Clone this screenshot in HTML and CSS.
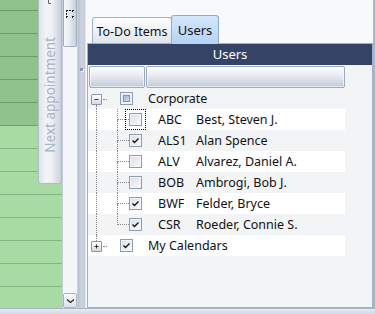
FILE: index.html
```html
<!DOCTYPE html>
<html>
<head>
<meta charset="utf-8">
<link rel="stylesheet" href="styles.css">
</head>
<body>
<div class="window">
  <div class="main">
    <div class="calendar">
      <div class="slot dark first"></div>
      <div class="slot dark"></div>
      <div class="slot dark"></div>
      <div class="slot dark"></div>
      <div class="slot dark"></div>
      <div class="slot dark"></div>
      <div class="slot"></div>
      <div class="slot"></div>
      <div class="slot"></div>
      <div class="slot"></div>
      <div class="slot"></div>
      <div class="slot"></div>
      <div class="slot"></div>
      <div class="slot"></div>
      <div class="next-appt">
        <svg class="pin" width="8" height="5" viewBox="0 0 8 5"><path d="M2.5 0 V3.5 H5" stroke="#5c6678" fill="none"/><path d="M5.5 0 V2" stroke="#ffffff" fill="none"/></svg>
        <span class="vtext">Next appointment</span>
      </div>
    </div>
    <div class="vscroll">
      <div class="thumb">
        <svg width="8" height="8" viewBox="0 0 8 8"><rect x="0" y="0" width="2" height="2" fill="#222"/><rect x="3" y="0" width="2" height="1" fill="#222"/><rect x="6" y="0" width="2" height="2" fill="#222"/><rect x="0" y="3" width="1" height="2" fill="#222"/><rect x="0" y="6" width="2" height="2" fill="#222"/><rect x="6" y="6" width="2" height="2" fill="#222"/><rect x="1" y="1" width="1" height="1" fill="#fff"/><rect x="7" y="1" width="1" height="1" fill="#fff"/><rect x="1" y="7" width="1" height="1" fill="#fff"/><rect x="7" y="7" width="1" height="1" fill="#fff"/></svg>
      </div>
      <div class="track"></div>
      <div class="down-btn">
        <svg width="9" height="6" viewBox="0 0 9 6"><path d="M1 1.5 L4.5 4.5 L8 1.5" stroke="#222" stroke-width="1.2" fill="none"/></svg>
      </div>
    </div>
    <div class="splitter"><span class="grip-dot"></span></div>
    <div class="panel">
      <div class="tabs">
        <div class="tab">To-Do Items</div>
        <div class="tab active">Users</div>
      </div>
      <div class="content">
        <div class="title">Users</div>
        <div class="col-heads">
          <div class="col c1"></div>
          <div class="col c2"></div>
        </div>
        <div class="tree">
          <div class="row">
            <div class="g1">
              <span class="sp-top"></span>
              <span class="exp-wrap"><svg class="exp" width="11" height="11" viewBox="0 0 11 11"><path d="M3 5.5 H8" stroke="#111" stroke-width="1"/></svg><span class="hdots"></span></span>
              <span class="ln"></span>
            </div>
            <span class="cb root-cb"><span class="ind"></span></span>
            <span class="root-label">Corporate</span>
          </div>
          <div class="row alt">
            <div class="g1"><span class="ln"></span></div>
            <div class="g2"><span class="tl"></span><span class="bl"></span></div>
            <span class="cb focus"></span>
            <span class="code">ABC</span><span class="name">Best, Steven J.</span>
          </div>
          <div class="row">
            <div class="g1"><span class="ln"></span></div>
            <div class="g2"><span class="tl"></span><span class="bl"></span></div>
            <span class="cb"><svg width="11" height="11" viewBox="0 0 11 11"><path d="M2.5 5.5 L4.5 7.5 L8.5 3.5" stroke="#111" stroke-width="1.3" fill="none"/></svg></span>
            <span class="code">ALS1</span><span class="name">Alan Spence</span>
          </div>
          <div class="row alt">
            <div class="g1"><span class="ln"></span></div>
            <div class="g2"><span class="tl"></span><span class="bl"></span></div>
            <span class="cb"></span>
            <span class="code">ALV</span><span class="name">Alvarez, Daniel A.</span>
          </div>
          <div class="row">
            <div class="g1"><span class="ln"></span></div>
            <div class="g2"><span class="tl"></span><span class="bl"></span></div>
            <span class="cb"></span>
            <span class="code">BOB</span><span class="name">Ambrogi, Bob J.</span>
          </div>
          <div class="row alt">
            <div class="g1"><span class="ln"></span></div>
            <div class="g2"><span class="tl"></span><span class="bl"></span></div>
            <span class="cb"><svg width="11" height="11" viewBox="0 0 11 11"><path d="M2.5 5.5 L4.5 7.5 L8.5 3.5" stroke="#111" stroke-width="1.3" fill="none"/></svg></span>
            <span class="code">BWF</span><span class="name">Felder, Bryce</span>
          </div>
          <div class="row">
            <div class="g1"><span class="ln"></span></div>
            <div class="g2"><span class="tl"></span><span class="bl last"></span></div>
            <span class="cb"><svg width="11" height="11" viewBox="0 0 11 11"><path d="M2.5 5.5 L4.5 7.5 L8.5 3.5" stroke="#111" stroke-width="1.3" fill="none"/></svg></span>
            <span class="code">CSR</span><span class="name">Roeder, Connie S.</span>
          </div>
          <div class="row alt">
            <div class="g1">
              <span class="ln-top"></span>
              <span class="exp-wrap"><svg class="exp" width="11" height="11" viewBox="0 0 11 11"><path d="M3 5.5 H8 M5.5 3 V8" stroke="#111" stroke-width="1"/></svg><span class="hdots"></span></span>
              <span class="sp-fill"></span>
            </div>
            <span class="cb root-cb"><svg width="11" height="11" viewBox="0 0 11 11"><path d="M2.5 5.5 L4.5 7.5 L8.5 3.5" stroke="#111" stroke-width="1.3" fill="none"/></svg></span>
            <span class="root-label">My Calendars</span>
          </div>
        </div>
      </div>
    </div>
  </div>
  <div class="hstrip"></div>
</div>
</body>
</html>
```

FILE: styles.css
```css
html, body {
  margin: 0;
  padding: 0;
}
body {
  width: 375px;
  height: 314px;
  overflow: hidden;
  background: #f4f5f8;
  font-family: "Noto Sans", "Open Sans", sans-serif;
  color: #111;
}
.window {
  display: flex;
  flex-direction: column;
  height: 314px;
}
.main {
  display: flex;
  height: 308px;
}

/* calendar column */
.calendar {
  width: 62px;
  position: relative;
  overflow: hidden;
  background: #a8dba3;
}
.slot {
  height: 22px;
  border-bottom: 1px solid #85b584;
}
.slot.first {
  height: 10px;
}
.slot.dark {
  background: #8fc28d;
  border-bottom-color: #6f9c6e;
}
.next-appt {
  position: absolute;
  left: 38px;
  top: 0;
  width: 24px;
  height: 184px;
  box-sizing: border-box;
  border: 1px solid #b0bccb;
  border-top: none;
  border-radius: 0 0 3px 3px;
  background: linear-gradient(90deg, #dfe4eb 0%, #f2f4f7 35%, #eceff3 60%, #c9d1dc 100%);
  display: flex;
  flex-direction: column;
  align-items: center;
}
.pin {
  display: block;
}
.vtext {
  writing-mode: vertical-rl;
  transform: rotate(180deg);
  font-size: 13.5px;
  color: #a7b2c4;
  margin-top: 32px;
  white-space: nowrap;
}

/* vertical scrollbar */
.vscroll {
  width: 16px;
  box-sizing: border-box;
  border-left: 1px solid #c3ccd8;
  border-right: 1px solid #c8d0da;
  background: #f3f5f8;
  display: flex;
  flex-direction: column;
}
.thumb {
  height: 47px;
  box-sizing: border-box;
  border: 1px solid #a3afc0;
  border-top: none;
  border-radius: 0 0 2px 2px;
  background: linear-gradient(90deg, #f7f8fa 0%, #e6eaef 50%, #c5cdd8 100%);
  display: flex;
  justify-content: center;
  padding-top: 10px;
}
.thumb svg {
  display: block;
}
.track {
  flex: 1;
}
.down-btn {
  height: 15px;
  box-sizing: border-box;
  border: 1px solid #a8b3c3;
  border-radius: 2px;
  background: linear-gradient(#fafbfc, #dce2ea);
  display: flex;
  align-items: center;
  justify-content: center;
}
.down-btn svg {
  display: block;
}

/* splitter */
.splitter {
  width: 8px;
  box-sizing: border-box;
  border-right: 1px solid #e3e7ed;
  background: linear-gradient(90deg, #b5c0ce, #cdd4de 50%, #c3cbd7);
  display: flex;
  flex-direction: column;
  align-items: center;
  padding-top: 68px;
}
.grip-dot {
  width: 3px;
  height: 3px;
  background: #8d99ab;
  box-shadow: 1px 1px 0 #f5f7fa;
}

/* right panel */
.panel {
  flex: 1;
  display: flex;
  flex-direction: column;
  padding-left: 1px;
  background: #f8f9fb;
  border-right: 2px solid #aab6c6;
}
.tabs {
  height: 43px;
  display: flex;
  align-items: flex-end;
  padding-left: 5px;
}
.tab {
  height: 26px;
  width: 80px;
  box-sizing: border-box;
  border: 1px solid #a3b0c3;
  border-bottom: none;
  border-radius: 3px 3px 0 0;
  background: linear-gradient(#fdfdfe, #dfe5ec);
  font-size: 12.5px;
  display: flex;
  align-items: center;
  justify-content: center;
  padding-top: 2px;
  color: #111;
}
.tab.active {
  position: relative;
  z-index: 1;
  width: 48px;
  height: 29px;
  margin-left: -1px;
  margin-bottom: -1px;
  border-color: #93abc9;
  background: linear-gradient(#d3e6fb, #b5d3f5);
  padding-top: 0;
  font-size: 13px;
}
.content {
  flex: 1;
  border: 1px solid #9fb0c6;
  background: #f3f4f6;
  display: flex;
  flex-direction: column;
}
.title {
  height: 21px;
  background: #334466;
  color: #fff;
  font-size: 13px;
  line-height: 21px;
  text-align: center;
}
.col-heads {
  display: flex;
  gap: 1px;
  padding: 1px 0 0 1px;
}
.col {
  height: 22px;
  box-sizing: border-box;
  border: 1px solid #9dabbf;
  border-radius: 2px;
  background: linear-gradient(#fbfcfd, #e7ebf0 45%, #c1cad8);
  box-shadow: inset 0 0 0 1px rgba(255, 255, 255, 0.6);
}
.c1 {
  width: 56px;
}
.c2 {
  width: 199px;
}

/* tree */
.tree {
  display: flex;
  flex-direction: column;
}
.row {
  display: flex;
  align-items: center;
  height: 21px;
  width: 257px;
  font-size: 12.5px;
}
.row.alt {
  background: #fff;
}
.g1 {
  width: 19px;
  align-self: stretch;
  display: flex;
  flex-direction: column;
}
.ln {
  flex: 1;
  margin-left: 8px;
  border-left: 1px dotted #8a8a8a;
}
.ln-top {
  height: 6px;
  margin-left: 8px;
  border-left: 1px dotted #8a8a8a;
}
.sp-top {
  height: 6px;
}
.sp-fill {
  flex: 1;
}
.exp-wrap {
  display: flex;
  align-items: center;
  margin-left: 3px;
  height: 11px;
}
.exp {
  display: block;
  box-sizing: border-box;
  border: 1px solid #8796ad;
  border-radius: 1px;
  background: linear-gradient(#ffffff, #d3dae4);
}
.hdots {
  width: 4px;
  margin-left: 1px;
  border-top: 1px dotted #8a8a8a;
}
.g2 {
  width: 22px;
  align-self: stretch;
  display: flex;
  flex-direction: column;
}
.tl {
  height: 10px;
  width: 11px;
  margin-left: 10px;
  border-left: 1px dotted #8a8a8a;
  border-bottom: 1px dotted #8a8a8a;
}
.bl {
  flex: 1;
  margin-left: 10px;
  border-left: 1px dotted #8a8a8a;
}
.bl.last {
  border-left-color: transparent;
}
.cb {
  width: 13px;
  height: 13px;
  box-sizing: border-box;
  border: 1px solid #8e9db6;
  background: linear-gradient(135deg, #d9dfe8, #f8f9fb);
  box-shadow: inset 0 0 0 1px #f2f4f7;
  display: flex;
  align-items: center;
  justify-content: center;
  flex: none;
}
.cb svg {
  display: block;
}
.cb.focus {
  outline: 1px dotted #000;
  outline-offset: 3px;
}
.root-cb {
  margin-left: 13px;
}
.ind {
  width: 7px;
  height: 7px;
  box-sizing: border-box;
  border: 1px solid #8797b0;
  background: linear-gradient(135deg, #a9b6c9, #d2d9e4);
}
.root-label {
  margin-left: 15px;
  white-space: nowrap;
}
.code {
  margin-left: 16px;
  width: 38px;
  white-space: nowrap;
}
.name {
  white-space: nowrap;
}

.hstrip {
  height: 6px;
  box-sizing: border-box;
  border-top: 1px solid #aab5c5;
  background: linear-gradient(#e6eaf0, #d3d9e2);
}
```
